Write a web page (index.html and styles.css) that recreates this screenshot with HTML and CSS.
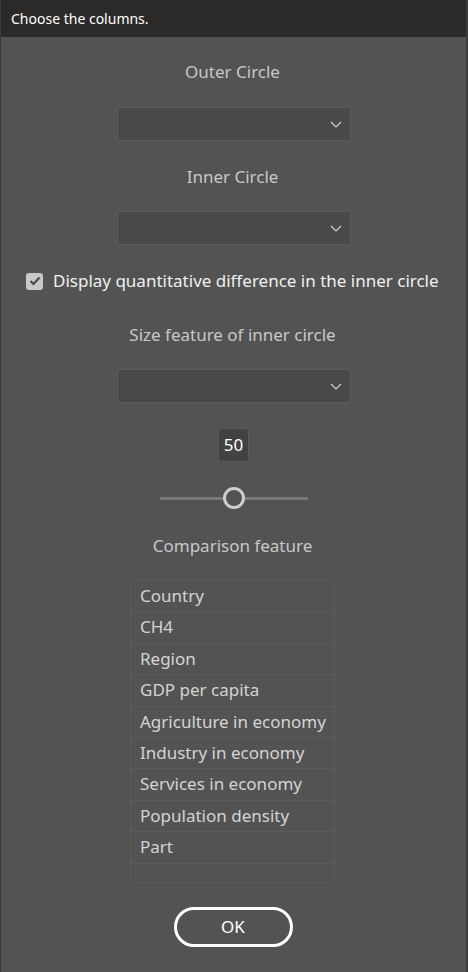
FILE: index.html
```html
<!DOCTYPE html>
<html>
<head>
<meta charset="utf-8">
<link rel="stylesheet" href="styles.css">
</head>
<body>
<div class="window">
  <div class="titlebar">Choose the columns.</div>
  <div class="content">
    <div class="label l1">Outer Circle</div>
    <div class="select s1"><svg class="chev" width="12" height="7" viewBox="0 0 12 7"><path d="M1 1 L6 6 L11 1" fill="none" stroke="#d0d0d0" stroke-width="1.2"/></svg></div>
    <div class="label l2">Inner Circle</div>
    <div class="select s2"><svg class="chev" width="12" height="7" viewBox="0 0 12 7"><path d="M1 1 L6 6 L11 1" fill="none" stroke="#d0d0d0" stroke-width="1.2"/></svg></div>
    <div class="check-row">
      <span class="checkbox"><svg width="12" height="10" viewBox="0 0 12 10"><path d="M1.5 5 L4.5 8 L10.5 1.5" fill="none" stroke="#4a4a4a" stroke-width="2.2"/></svg></span>
      <span class="check-text">Display quantitative difference in the inner circle</span>
    </div>
    <div class="label l3">Size feature of inner circle</div>
    <div class="select s3"><svg class="chev" width="12" height="7" viewBox="0 0 12 7"><path d="M1 1 L6 6 L11 1" fill="none" stroke="#d0d0d0" stroke-width="1.2"/></svg></div>
    <div class="numbox">50</div>
    <div class="slider">
      <div class="track"></div>
      <div class="thumb"></div>
    </div>
    <div class="label l4">Comparison feature</div>
    <div class="list">
      <div class="row">Country</div>
      <div class="row">CH4</div>
      <div class="row">Region</div>
      <div class="row">GDP per capita</div>
      <div class="row">Agriculture in economy</div>
      <div class="row">Industry in economy</div>
      <div class="row">Services in economy</div>
      <div class="row">Population density</div>
      <div class="row">Part</div>
      <div class="row empty"></div>
    </div>
    <div class="ok">OK</div>
  </div>
</div>
</body>
</html>
```
FILE: styles.css
```css
html, body {
  margin: 0;
  padding: 0;
  background: #535353;
}
body {
  width: 468px;
  height: 972px;
  overflow: hidden;
  font-family: "Noto Sans", "Open Sans", sans-serif;
}
.window {
  width: 468px;
  height: 972px;
  box-sizing: border-box;
  border-left: 1px solid #3c3c3c;
  border-right: 2px solid #3c3c3c;
  background: #535353;
  display: flex;
  flex-direction: column;
}
.titlebar {
  height: 37px;
  background: #2b2a28;
  color: #ffffff;
  font-size: 14px;
  line-height: 37px;
  padding-left: 10px;
  flex: none;
}
.content {
  display: flex;
  flex-direction: column;
  align-items: center;
}
.label {
  color: #c8c8c8;
  font-size: 17px;
  line-height: 22px;
  height: 22px;
  margin-right: 2px;
}
.l1 { margin-top: 24px; }
.l2 { margin-top: 25px; }
.l3 { margin-top: 32px; }
.l4 { margin-top: 25px; }
.select {
  width: 234px;
  height: 34px;
  box-sizing: border-box;
  background: #494949;
  border: 1px solid #5c5c5c;
  border-radius: 3px;
  display: flex;
  align-items: center;
  justify-content: flex-end;
  padding-right: 8px;
}
.s1 { margin-top: 24px; }
.s2 { margin-top: 23px; }
.s3 { margin-top: 23px; }
.check-row {
  align-self: flex-start;
  margin-top: 25px;
  margin-left: 25px;
  height: 22px;
  display: flex;
  align-items: center;
}
.checkbox {
  width: 17px;
  height: 17px;
  border-radius: 3px;
  background: #c8c8c8;
  display: flex;
  align-items: center;
  justify-content: center;
  margin-right: 10px;
}
.check-text {
  color: #f0f0f0;
  font-size: 17px;
  line-height: 22px;
}
.numbox {
  margin-top: 25px;
  width: 31px;
  height: 34px;
  box-sizing: border-box;
  background: #424242;
  border: 1px solid #5a5a5a;
  border-radius: 3px;
  color: #ffffff;
  font-size: 17px;
  line-height: 32px;
  text-align: center;
}
.slider {
  margin-top: 24px;
  width: 148px;
  height: 24px;
  position: relative;
  display: flex;
  align-items: center;
  justify-content: center;
}
.track {
  width: 148px;
  height: 3px;
  background: #787878;
}
.thumb {
  position: absolute;
  left: 63px;
  top: 1px;
  width: 22px;
  height: 22px;
  box-sizing: border-box;
  border-radius: 50%;
  border: 3px solid #cfcfcf;
  background: #535353;
}
.list {
  margin-top: 23px;
  margin-right: 2px;
  width: 205px;
  box-sizing: border-box;
  border: 1px solid #5c5c5c;
  border-radius: 3px;
  display: flex;
  flex-direction: column;
}
.row {
  height: 31.4px;
  box-sizing: border-box;
  border-bottom: 1px solid #5c5c5c;
  color: #d4d4d4;
  font-size: 17px;
  line-height: 30px;
  padding-left: 9px;
  white-space: nowrap;
}
.row.empty {
  height: 18px;
  border-bottom: none;
}
.ok {
  margin-top: 24px;
  margin-right: 1px;
  width: 119px;
  height: 40px;
  box-sizing: border-box;
  border: 3px solid #ffffff;
  border-radius: 20px;
  color: #ffffff;
  font-size: 17px;
  line-height: 34px;
  text-align: center;
}
```
